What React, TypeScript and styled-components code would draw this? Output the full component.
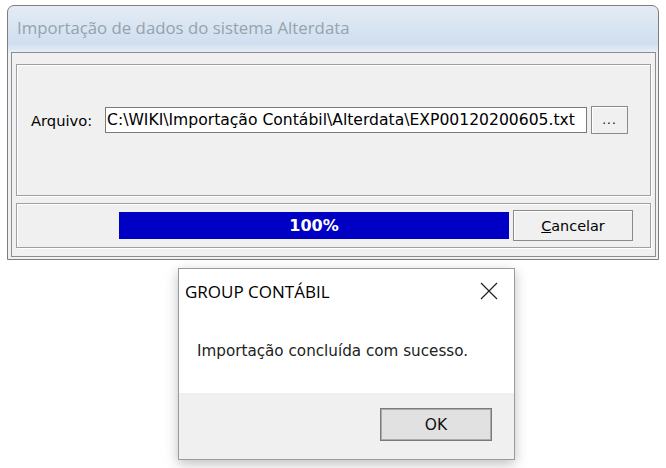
import React from "react";
import styled, { createGlobalStyle } from "styled-components";

const Global = createGlobalStyle`
  html, body { margin: 0; padding: 0; background: #ffffff; }
  body { width: 666px; height: 468px; overflow: hidden; font-family: "Open Sans", "Noto Sans", sans-serif; }
`;

const Page = styled.div`
  width: 666px;
  height: 468px;
  position: relative;
  background: #ffffff;
  padding: 5px 0 0 7px;
  box-sizing: border-box;
`;

const Window = styled.div`
  width: 652px;
  height: 255px;
  box-sizing: border-box;
  border: 1px solid #7d7d7d;
  border-radius: 7px 7px 0 0;
  background: linear-gradient(#e4ecf5 0px, #cfdfef 38px, #eef2f6 48px, #eef1f4 100%);
  display: flex;
  flex-direction: column;
`;

const TitleBar = styled.div`
  height: 46px;
  display: flex;
  align-items: center;
  padding: 0 0 4px 9px;
  box-sizing: border-box;
  font-family: "Open Sans", sans-serif;
  font-size: 16.8px;
  color: #96a2ad;
`;

const Client = styled.div`
  flex: 1;
  margin: 0 2px 2px 3px;
  border: 1px solid #8e8e8e;
  background: #f0f0f0;
  padding: 11px 4px 7px 4px;
  display: flex;
  flex-direction: column;
  gap: 7px;
`;

const Panel = styled.div<{ $h: number }>`
  height: ${(p) => p.$h}px;
  box-sizing: border-box;
  border: 1px solid #a0a0a0;
  box-shadow: inset 1px 1px 0 #ffffff, 1px 1px 0 #ffffff;
  display: flex;
  align-items: center;
`;

const FileRow = styled.div`
  display: flex;
  align-items: center;
  margin-top: -20px;
  padding-left: 14px;
`;

const Label = styled.span`
  font-family: "DejaVu Sans", sans-serif;
  font-size: 14.7px;
  color: #000;
  width: 74px;
`;

const Input = styled.div`
  width: 482px;
  height: 26px;
  box-sizing: border-box;
  border: 1px solid #7a7a7a;
  background: #fff;
  font-family: "DejaVu Sans", sans-serif;
  font-size: 15.6px;
  line-height: 24px;
  padding-left: 1px;
  white-space: nowrap;
  overflow: hidden;
`;

const Button = styled.div<{ $w: number; $h: number }>`
  width: ${(p) => p.$w}px;
  height: ${(p) => p.$h}px;
  box-sizing: border-box;
  border: 1px solid #8a8a8a;
  background: #f0f0f0;
  box-shadow: inset 1px 1px 0 #ffffff;
  display: flex;
  align-items: center;
  justify-content: center;
  font-family: "DejaVu Sans", sans-serif;
  font-size: 14.4px;
  color: #000;
`;

const Dots = styled(Button)`
  margin-left: 4px;
  align-items: flex-end;
  padding-bottom: 6px;
  font-size: 12px;
  letter-spacing: 1px;
`;

const ProgressRow = styled.div`
  display: flex;
  align-items: center;
  padding-left: 102px;
  gap: 4px;
`;

const Progress = styled.div`
  width: 390px;
  height: 27px;
  background: #0000c4;
  color: #fff;
  display: flex;
  align-items: center;
  justify-content: center;
  font-family: "DejaVu Sans", sans-serif;
  font-weight: bold;
  font-size: 16px;
`;

const U = styled.span`
  text-decoration: underline;
`;

const Dialog = styled.div`
  position: absolute;
  left: 178px;
  top: 268px;
  width: 337px;
  height: 192px;
  box-sizing: border-box;
  border: 1px solid #9a9a9a;
  background: #ffffff;
  box-shadow: 0 4px 12px rgba(0, 0, 0, 0.25);
  display: flex;
  flex-direction: column;
`;

const DlgTitle = styled.div`
  height: 44px;
  display: flex;
  align-items: center;
  justify-content: space-between;
  padding: 0 16px 0 6px;
  font-family: "Open Sans", sans-serif;
  font-size: 17px;
  color: #000;
`;

const Message = styled.div`
  flex: 1;
  padding: 29px 0 0 18px;
  font-family: "DejaVu Sans", sans-serif;
  font-size: 15.2px;
  color: #222;
`;

const DlgFooter = styled.div`
  height: 63px;
  background: #f0f0f0;
  display: flex;
  align-items: center;
  justify-content: flex-end;
  padding: 0 22px 3px 0;
`;

const OkButton = styled.div`
  width: 112px;
  height: 33px;
  box-sizing: border-box;
  border: 1px solid #7a7a7a;
  box-shadow: inset 0 0 0 1px #ababab;
  background: #e1e1e1;
  display: flex;
  align-items: center;
  justify-content: center;
  font-family: "DejaVu Sans", sans-serif;
  font-size: 15.5px;
  color: #111;
`;

export default function App() {
  return (
    <Page>
      <Global />
      <Window>
        <TitleBar>Importação de dados do sistema Alterdata</TitleBar>
        <Client>
          <Panel $h={132}>
            <FileRow>
              <Label>Arquivo:</Label>
              <Input>C:\WIKI\Importação Contábil\Alterdata\EXP00120200605.txt</Input>
              <Dots $w={37} $h={28}>...</Dots>
            </FileRow>
          </Panel>
          <Panel $h={45}>
            <ProgressRow>
              <Progress>100%</Progress>
              <Button $w={120} $h={31}>
                <span>
                  <U>C</U>ancelar
                </span>
              </Button>
            </ProgressRow>
          </Panel>
        </Client>
      </Window>
      <Dialog>
        <DlgTitle>
          <span>GROUP CONTÁBIL</span>
          <svg width="18" height="18" viewBox="0 0 18 18">
            <path d="M1 1 L17 17 M17 1 L1 17" stroke="#222" strokeWidth="1.2" />
          </svg>
        </DlgTitle>
        <Message>Importação concluída com sucesso.</Message>
        <DlgFooter>
          <OkButton>OK</OkButton>
        </DlgFooter>
      </Dialog>
    </Page>
  );
}
